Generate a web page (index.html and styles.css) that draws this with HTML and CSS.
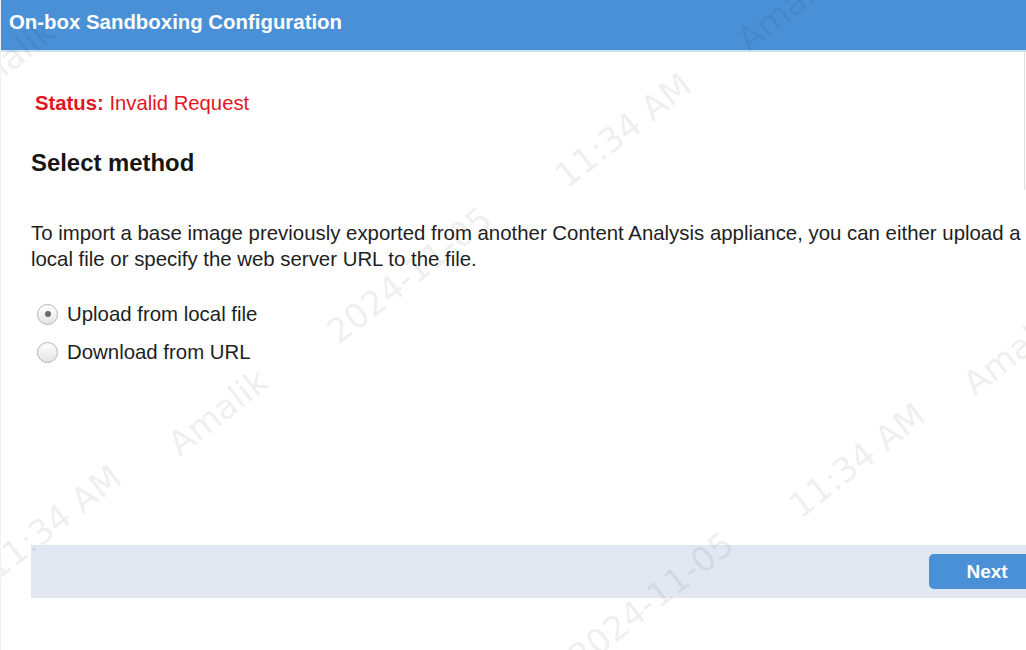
FILE: index.html
```html
<!DOCTYPE html>
<html lang="en">
<head>
<meta charset="utf-8">
<title>On-box Sandboxing Configuration</title>
<link rel="stylesheet" href="styles.css">
</head>
<body>
<div class="page">
  <header class="header">On-box Sandboxing Configuration</header>
  <main class="content">
    <p class="status"><strong>Status:</strong> Invalid Request</p>
    <h2 class="section-title">Select method</h2>
    <p class="desc">To import a base image previously exported from another Content Analysis appliance, you can either upload a local file or specify the web server URL to the file.</p>
    <div class="options">
      <label class="option"><span class="radio checked"></span>Upload from local file</label>
      <label class="option"><span class="radio"></span>Download from URL</label>
    </div>
    <div class="footer">
      <button class="btn-next">Next</button>
    </div>
  </main>
  <div class="scroll-edge"></div>
  <div class="watermarks">
    <span class="wm" style="left:786px;top:8px">Amalik</span>
    <span class="wm" style="left:4px;top:62px">Amalik</span>
    <span class="wm" style="left:622px;top:130px">11:34 AM</span>
    <span class="wm" style="left:408px;top:275px">2024-11-05</span>
    <span class="wm" style="left:217px;top:412px">Amalik</span>
    <span class="wm" style="left:52px;top:522px">11:34 AM</span>
    <span class="wm" style="left:1012px;top:352px">Amalik</span>
    <span class="wm" style="left:856px;top:460px">11:34 AM</span>
    <span class="wm" style="left:650px;top:600px">2024-11-05</span>
  </div>
</div>
</body>
</html>
```

FILE: styles.css
```css
html, body {
  margin: 0;
  padding: 0;
  width: 1026px;
  height: 650px;
  overflow: hidden;
  background: #ffffff;
}

.page {
  position: relative;
  width: 1026px;
  height: 650px;
  overflow: hidden;
  font-family: "Liberation Sans", Arial, sans-serif;
  color: #1c1c1c;
  border-left: 1px solid #eef1f6;
  box-sizing: border-box;
}

.header {
  height: 50px;
  line-height: 45px;
  background: #4a90d6;
  border-bottom: 2px solid #cfe0f3;
  color: #ffffff;
  font-weight: bold;
  font-size: 20.4px;
  padding-left: 8px;
}

.content {
  padding-left: 30px;
  display: flex;
  flex-direction: column;
}

.status {
  margin: 40px 0 0 4px;
  font-size: 20.3px;
  line-height: 22px;
  color: #e3161f;
}

.status strong {
  font-weight: bold;
}

.section-title {
  margin: 36px 0 0 0;
  font-size: 23.9px;
  line-height: 26px;
  font-weight: bold;
  color: #161616;
}

.desc {
  margin: 44px 0 0 0;
  width: 1000px;
  font-size: 20.4px;
  line-height: 26px;
  color: #1e1e1e;
}

.options {
  margin-top: 23px;
  display: flex;
  flex-direction: column;
}

.option {
  display: flex;
  align-items: center;
  height: 38px;
  font-size: 20.4px;
  color: #1e1e1e;
  padding-left: 6px;
}

.radio {
  position: relative;
  width: 21px;
  height: 21px;
  border-radius: 50%;
  border: 1px solid #b4b4b4;
  box-sizing: border-box;
  background: linear-gradient(#ffffff, #e4e4e4);
  margin-right: 9px;
  flex: none;
}

.radio.checked::after {
  content: "";
  position: absolute;
  left: 6.5px;
  top: 6.5px;
  width: 6px;
  height: 6px;
  border-radius: 50%;
  background: #6a6a6a;
}

.footer {
  margin-top: 174px;
  height: 53px;
  background: #e1e8f2;
  display: flex;
  justify-content: flex-end;
  align-items: flex-start;
  padding-top: 9px;
  box-sizing: border-box;
}

.btn-next {
  width: 116px;
  height: 35px;
  margin-right: -19px;
  flex: none;
  border: none;
  border-radius: 5px;
  background: #4a90d6;
  color: #ffffff;
  font-family: "Liberation Sans", Arial, sans-serif;
  font-weight: bold;
  font-size: 19px;
  padding: 0;
}

.scroll-edge {
  position: absolute;
  left: 1023px;
  top: 52px;
  width: 1px;
  height: 138px;
  background: #dedede;
}

.watermarks {
  position: absolute;
  inset: 0;
  pointer-events: none;
}

.wm {
  position: absolute;
  transform: translate(-50%, -50%) rotate(-38deg);
  white-space: nowrap;
  font-family: "DejaVu Sans", sans-serif;
  font-size: 34px;
  color: rgba(0, 0, 0, 0.085);
}
```
